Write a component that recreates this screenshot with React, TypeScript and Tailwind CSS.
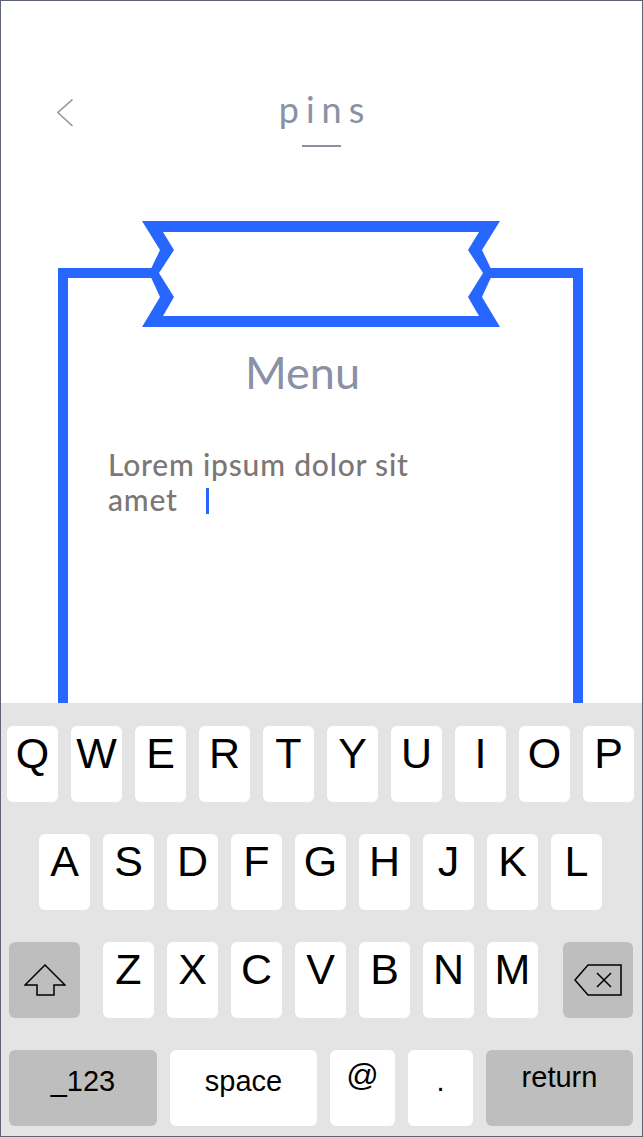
import React from "react";

const row1 = ["Q", "W", "E", "R", "T", "Y", "U", "I", "O", "P"];
const row2 = ["A", "S", "D", "F", "G", "H", "J", "K", "L"];
const row3 = ["Z", "X", "C", "V", "B", "N", "M"];

function LetterKey({ ch }: { ch: string }) {
  return (
    <div className="w-[51px] h-[76px] rounded-[6px] bg-white text-center pt-[6px] text-[43px] leading-none text-black">
      {ch}
    </div>
  );
}

export default function App() {
  return (
    <div className="w-[643px] h-[1137px] border border-[#5e6373] bg-white flex flex-col overflow-hidden font-['Lato',sans-serif]">
      {/* header */}
      <div className="h-[146px] pt-[90px] grid grid-cols-[1fr_auto_1fr]">
        <div className="pl-[56px] pt-[8px]">
          <svg width="17" height="29" viewBox="0 0 17 29">
            <polyline
              points="15.5,0.5 0.8,13.5 15.5,27"
              fill="none"
              stroke="#8a90a5"
              strokeWidth="1.5"
            />
          </svg>
        </div>
        <div className="flex flex-col items-center">
          <div className="text-[36px] leading-none tracking-[7px] pl-[7px] text-[#8a90a5]">pins</div>
          <div className="mt-[18px] w-[39px] h-[2px] bg-[#8a90a5]" />
        </div>
        <div />
      </div>

      {/* framed card */}
      <div className="mt-[121px] ml-[57px] w-[525px] flex-1 relative border-x-[10px] border-t-[10px] border-[#2767ff]">
        <svg
          className="absolute left-[74px] -top-[57px]"
          width="358"
          height="106"
          viewBox="0 0 358 106"
        >
          <polygon
            points="0,0 358,0 340,29 351,52 340,76 358,106 0,106 18,76 7,52 18,29"
            fill="#2767ff"
          />
          <polygon
            points="21,11 337,11 326,29 341,52 326,76 337,95 21,95 32,76 17,52 32,29"
            fill="#ffffff"
          />
        </svg>
        <div className="mt-[72px] text-center pr-[36px] text-[45px] leading-none text-[#8a90a5]">Menu</div>
        <div className="mt-[52px] ml-[40px] w-[340px] text-[30px] leading-[35px] tracking-[0.8px] font-medium text-[#7a7774]">
          Lorem ipsum dolor sit amet
          <span className="inline-block w-[3px] h-[26px] bg-[#2767ff] ml-[28px] align-[-3px]" />
        </div>
      </div>

      {/* keyboard */}
      <div className="h-[433px] bg-[#e4e4e4] pt-[23px] flex flex-col gap-[32px] font-['Liberation_Sans',Arial,sans-serif]">
        <div className="h-[76px] flex gap-[13px] pl-[6px]">
          {row1.map((c) => (
            <LetterKey key={c} ch={c} />
          ))}
        </div>
        <div className="h-[76px] flex gap-[13px] pl-[38px]">
          {row2.map((c) => (
            <LetterKey key={c} ch={c} />
          ))}
        </div>
        <div className="h-[76px] flex pl-[8px]">
          <div className="w-[71px] h-[76px] rounded-[6px] bg-[#bebebe] flex items-center justify-center">
            <svg width="42" height="32" viewBox="0 0 42 32">
              <path
                d="M21 1 L41 21 L30 21 L30 31 L13 31 L13 21 L1 21 Z"
                fill="none"
                stroke="#000"
                strokeWidth="1.5"
                strokeLinejoin="miter"
              />
            </svg>
          </div>
          <div className="ml-[23px] flex gap-[13px]">
            {row3.map((c) => (
              <LetterKey key={c} ch={c} />
            ))}
          </div>
          <div className="ml-[25px] w-[70px] h-[76px] rounded-[6px] bg-[#bebebe] flex items-center justify-center">
            <svg width="49" height="32" viewBox="0 0 49 32">
              <path
                d="M1 16 L14 1 L47 1 L47 31 L14 31 Z"
                fill="none"
                stroke="#000"
                strokeWidth="1.5"
              />
              <path d="M23 9 L37 23 M37 9 L23 23" stroke="#000" strokeWidth="1.5" />
            </svg>
          </div>
        </div>
        <div className="h-[76px] flex gap-[13px] pl-[8px] text-black">
          <div className="w-[148px] h-[76px] rounded-[6px] bg-[#bebebe] text-center pt-[17px] text-[29px] leading-none">
            _123
          </div>
          <div className="w-[147px] h-[76px] rounded-[6px] bg-white text-center pt-[17px] text-[29px] leading-none">
            space
          </div>
          <div className="w-[65px] h-[76px] rounded-[6px] bg-white text-center pt-[9px] text-[32px] leading-none">
            @
          </div>
          <div className="w-[65px] h-[76px] rounded-[6px] bg-white text-center pt-[17px] text-[29px] leading-none">
            .
          </div>
          <div className="w-[147px] h-[76px] rounded-[6px] bg-[#bebebe] text-center pt-[13px] text-[29px] leading-none">
            return
          </div>
        </div>
      </div>
    </div>
  );
}
